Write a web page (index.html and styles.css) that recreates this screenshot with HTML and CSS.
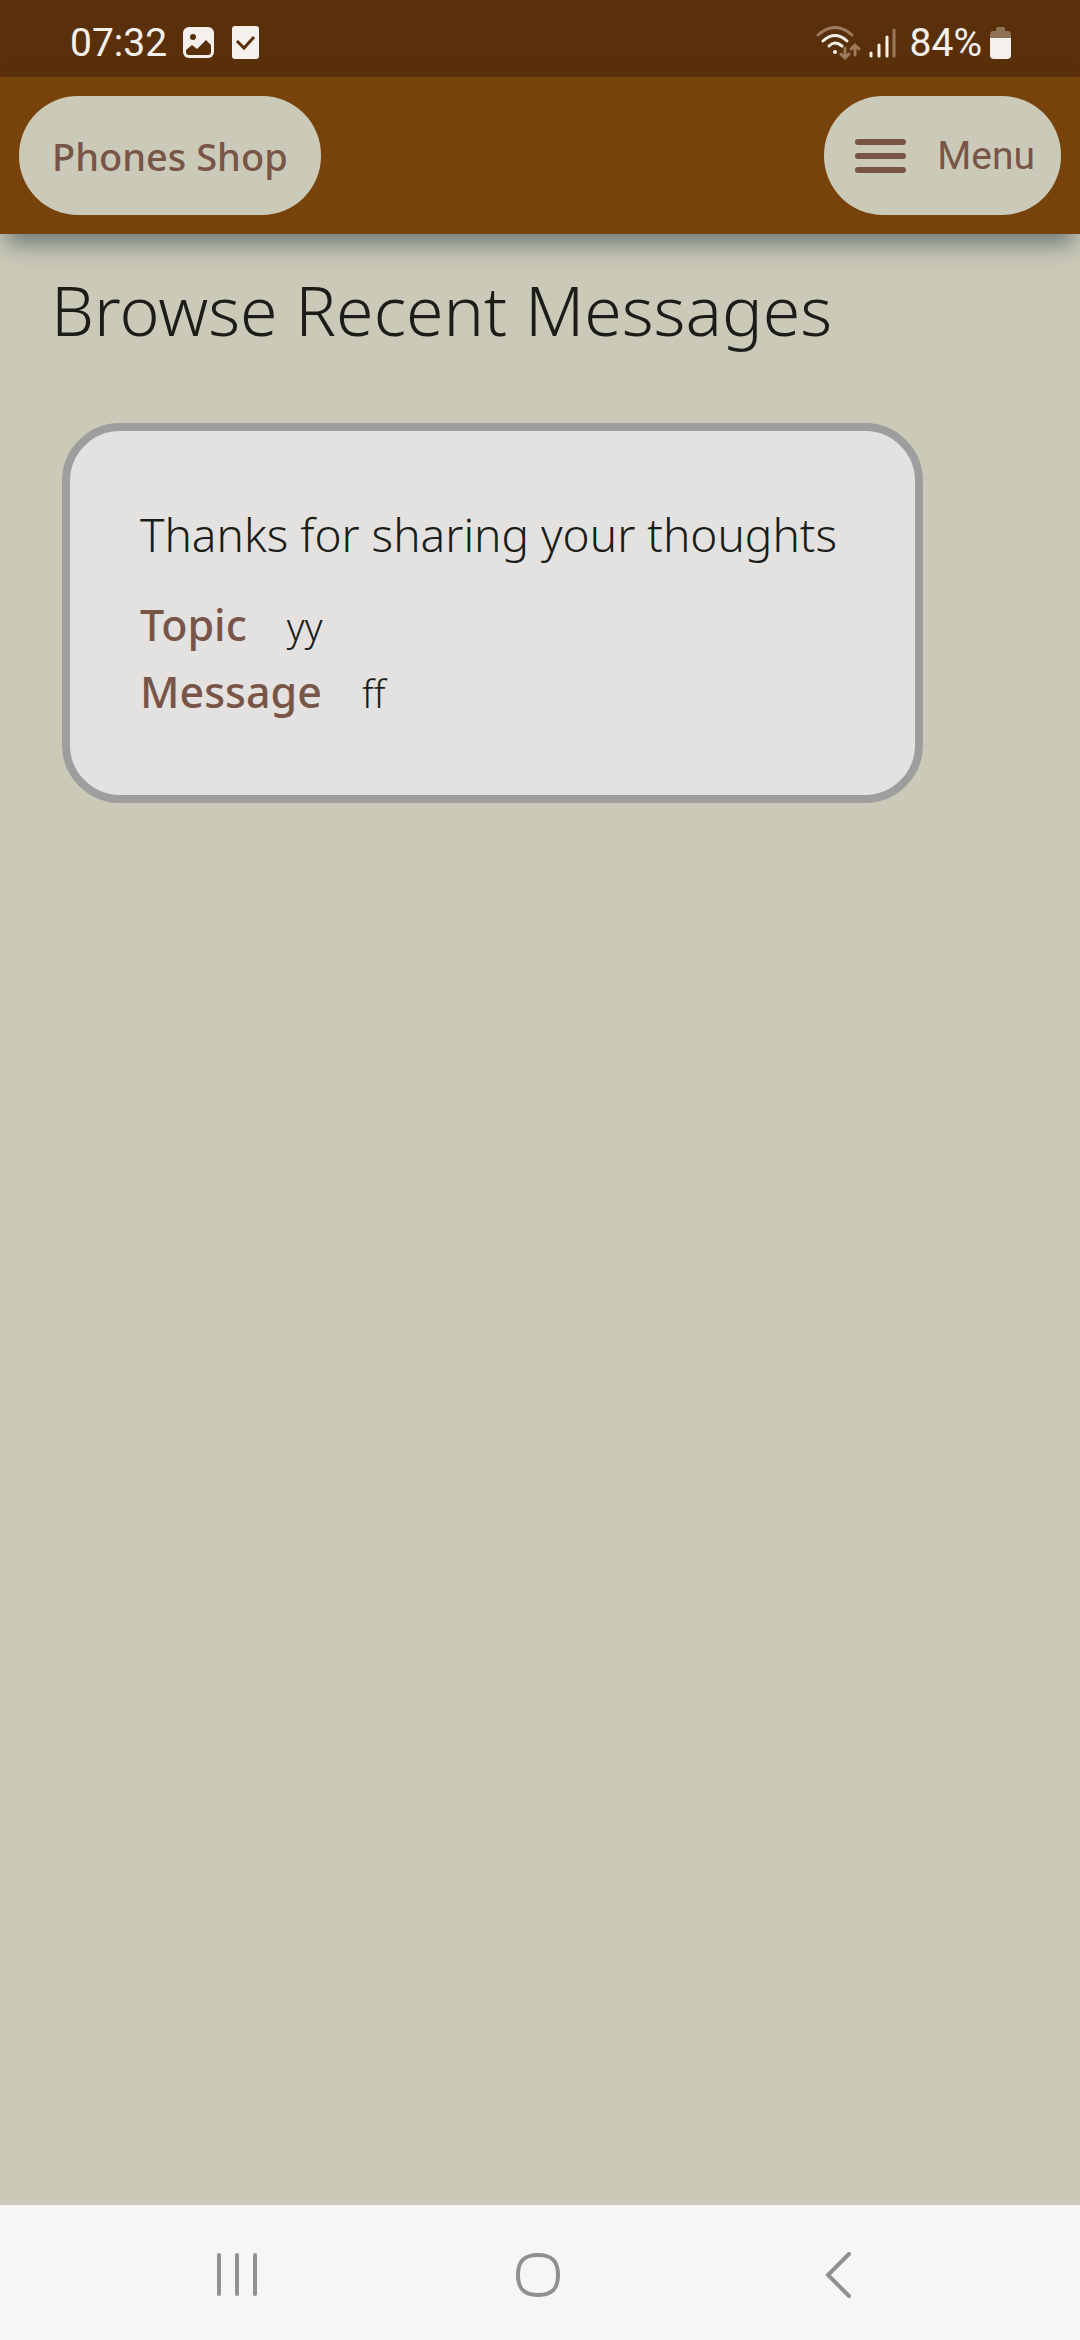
FILE: index.html
```html
<!DOCTYPE html>
<html lang="en">
<head>
<meta charset="utf-8">
<meta name="viewport" content="width=device-width, initial-scale=1">
<title>Phones Shop</title>
<link rel="stylesheet" href="styles.css">
</head>
<body>
<div class="status">
  <div class="status-group">
    <span class="status-text">07:32</span>
    <svg class="icon-image" width="32" height="32" viewBox="0 0 32 32" aria-hidden="true">
      <rect width="31" height="31" x="0" y="0" rx="6" fill="#f5f0ec"/>
      <circle cx="10" cy="10" r="3" fill="#5a300b"/>
      <path d="M3 23 9 18l5 4 9-9 5 5v7q0 3-3 3H6q-3 0-3-3z" fill="#5a300b"/>
    </svg>
    <svg class="icon-check" width="27" height="33" viewBox="0 0 27 33" aria-hidden="true">
      <rect width="27" height="33" rx="3" fill="#f5f0ec"/>
      <path d="m5 15 7 7L22 11" fill="none" stroke="#5a300b" stroke-width="3"/>
    </svg>
  </div>
  <div class="status-group">
    <svg width="45" height="34" viewBox="0 0 45 34" fill="none" stroke-linecap="round" aria-hidden="true">
      <path d="M2 9q17-15 34 0" stroke="#9b7a5d" stroke-width="3"/>
      <path d="M7 15q12-11 24 0M13 20q6-6 13 0" stroke="#f5f0ec" stroke-width="3"/>
      <circle cx="19" cy="26" r="2" fill="#f5f0ec"/>
      <path d="M29 22v10m-4-4 4 4 4-4M39 29V19m-4 4 4-4 4 4" stroke="#9b7a5d" stroke-width="3"/>
    </svg>
    <svg class="icon-signal" width="27" height="30" viewBox="0 0 27 30" fill="none" stroke-linecap="round" stroke-width="3" aria-hidden="true">
      <path d="M2 25v3M10 17v11M18 9v19" stroke="#f5f0ec"/>
      <path d="M25 2v26" stroke="#9b7a5d"/>
    </svg>
    <span class="status-text">84%</span>
    <svg class="icon-battery" width="21" height="32" viewBox="0 0 21 32" aria-hidden="true">
      <path d="M0 11V8q0-4 3-4h3V2q0-2 2-2h5q2 0 2 2v2h3q3 0 3 4v3z" fill="#8f7355"/>
      <path d="M0 11h21v17q0 4-4 4H4q-4 0-4-4z" fill="#f5f0ec"/>
    </svg>
  </div>
</div>
<header class="header">
  <a class="pill brand" href="#">Phones Shop</a>
  <button class="pill menu" type="button">
    <svg width="51" height="34" viewBox="0 0 51 34" stroke="#795548" stroke-width="6" stroke-linecap="round" aria-hidden="true">
      <path d="M3 3h45M3 17h45M3 31h45"/>
    </svg>
    Menu
  </button>
</header>
<main class="main">
  <h1 class="title">Browse Recent Messages</h1>
  <article class="card">
    <p class="thanks">Thanks for sharing your thoughts</p>
    <dl class="fields">
      <div class="field"><dt class="label">Topic</dt><dd class="value">yy</dd></div>
      <div class="field"><dt class="label">Message</dt><dd class="value">ff</dd></div>
    </dl>
  </article>
</main>
<nav class="nav" aria-label="System">
  <button class="nav-button" type="button" aria-label="Recents">
    <svg width="44" height="46" viewBox="0 0 44 46" fill="none" stroke="#909090" stroke-width="4" stroke-linecap="round"><path d="M4 3v39M22 3v39M40 3v39"/></svg>
  </button>
  <button class="nav-button" type="button" aria-label="Home">
    <svg width="46" height="46" viewBox="0 0 46 46" fill="none" stroke="#909090" stroke-width="4"><path d="M23 3C37 3 43 9 43 23S37 43 23 43 3 37 3 23 9 3 23 3z"/></svg>
  </button>
  <button class="nav-button" type="button" aria-label="Back">
    <svg width="46" height="46" viewBox="0 0 46 46" fill="none" stroke="#909090" stroke-width="4" stroke-linecap="round"><path d="M33 2 12 23l21 21"/></svg>
  </button>
</nav>
</body>
</html>
```
FILE: styles.css
```css
* { box-sizing: border-box; }

body {
  margin: 0;
  min-height: 100vh;
  display: flex;
  flex-direction: column;
  background: #cbcab8;
  color: #1c1c18;
  font-family: "Noto Sans", sans-serif;
}

.status {
  display: flex;
  align-items: center;
  justify-content: space-between;
  height: 77px;
  padding: 8px 69px 0 70px;
  background: #5a300b;
}

.status-group {
  display: flex;
  align-items: center;
}

.status-text {
  color: #f5f0ec;
  font: 400 39px/44px Roboto, sans-serif;
}

.icon-image { margin-left: 16px; }
.icon-check { margin-left: 17px; }
.icon-signal { margin: 0 14px 0 8px; }
.icon-battery { margin-left: 8px; }

.header {
  display: flex;
  align-items: center;
  justify-content: space-between;
  height: 157px;
  padding: 0 19px;
  background: #78420b;
  box-shadow: 0 14px 24px -6px rgba(40, 60, 70, .65);
}

.pill {
  display: flex;
  align-items: center;
  justify-content: center;
  height: 119px;
  border: 0;
  border-radius: 59px;
  background: #cbcab8;
  color: #795548;
}

.brand {
  padding: 0 33px;
  font-size: 38px;
  font-weight: 500;
  text-decoration: none;
}

.menu {
  gap: 31px;
  padding: 0 26px 0 31px;
  font: 400 39px/44px Roboto, sans-serif;
}

.main {
  flex: 1;
  padding: 28px 62px 0 51px;
}

.title {
  margin: 0;
  font-size: 68px;
  font-weight: 300;
  line-height: 96px;
}

.card {
  max-width: 861px;
  margin: 65px 0 0 11px;
  padding: 70px;
  border: 8px solid #9e9e9e;
  border-radius: 58px;
  background: #e3e2e0;
}

.thanks {
  margin: 0 0 24px;
  font-size: 46px;
  font-weight: 300;
  line-height: 66px;
}

.fields { margin: 0; }

.field {
  display: flex;
  align-items: baseline;
  gap: 40px;
  height: 67px;
}

.label {
  color: #795548;
  font-size: 43px;
  font-weight: 500;
  line-height: 68px;
}

.value {
  margin: 0;
  font-size: 38px;
  font-weight: 300;
  line-height: 68px;
}

.nav {
  display: flex;
  justify-content: center;
  height: 135px;
  padding: 4px 4px 0 0;
  background: #f6f6f6;
}

.nav-button {
  display: flex;
  flex: 0 0 28%;
  align-items: center;
  justify-content: center;
  padding: 0;
  border: 0;
  background: none;
}
```
